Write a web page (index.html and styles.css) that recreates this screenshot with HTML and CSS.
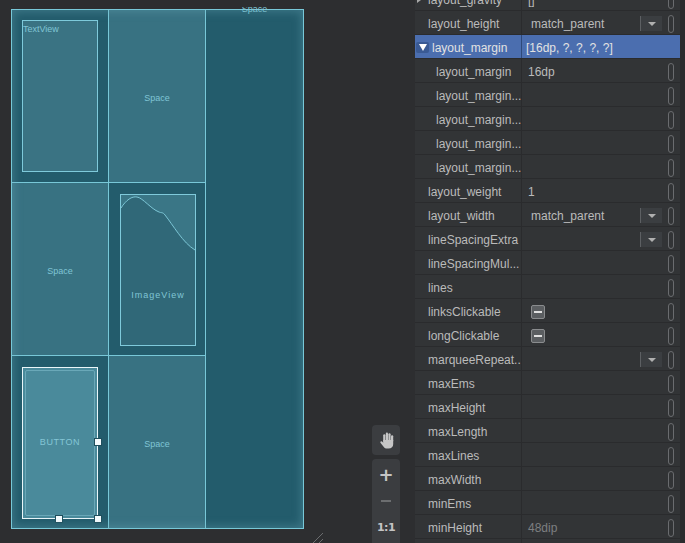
FILE: index.html
```html
<!DOCTYPE html>
<html>
<head>
<meta charset="utf-8">
<link rel="stylesheet" href="styles.css">
</head>
<body>
<div class="app">
  <div class="canvas">
    <div class="device">
      <div class="cell dark pad-a">
        <div class="view textview"><span class="lbl tl">TextView</span></div>
      </div>
      <div class="cell light center"><span class="lbl">Space</span></div>
      <div class="cell dark tall"><span class="lbl top">Space</span></div>
      <div class="cell light center"><span class="lbl">Space</span></div>
      <div class="cell dark pad-b">
        <div class="view imageview">
          <svg class="img" viewBox="0 0 74 150" preserveAspectRatio="none" width="74" height="150">
            <path d="M0,0 L0,13 C5,5 11,1 16,2 C22,3 30,14 38,17 C40,18 42,17 44,20 C52,30 62,48 74,55 L74,0 Z" fill="#3a7686"/>
            <path d="M0,13 C5,5 11,1 16,2 C22,3 30,14 38,17 C40,18 42,17 44,20 C52,30 62,48 74,55" fill="none" stroke="#7cc6d6" stroke-width="1"/>
          </svg>
          <span class="lbl wide">ImageView</span>
        </div>
      </div>
      <div class="cell dark pad-c">
        <div class="view button">
          <div class="btn-inner"><span class="lbl">BUTTON</span></div>
          <span class="handle h-r"></span>
          <span class="handle h-b"></span>
          <span class="handle h-br"></span>
        </div>
      </div>
      <div class="cell light center"><span class="lbl">Space</span></div>
    </div>

    <div class="zoom-box hand-box">
      <svg width="14" height="17" viewBox="0 0 14 17">
        <rect x="3.2" y="2.2" width="2.2" height="8" rx="1.1" fill="#c6c6c6"/>
        <rect x="5.8" y="0.6" width="2.2" height="9" rx="1.1" fill="#c6c6c6"/>
        <rect x="8.4" y="1.2" width="2.2" height="9" rx="1.1" fill="#c6c6c6"/>
        <rect x="11" y="3.2" width="2.2" height="7" rx="1.1" fill="#c6c6c6"/>
        <path d="M3.2,8 L13.2,8 L13.2,12 C13.2,14.8 11.5,16.6 8.6,16.6 L7,16.6 C5.6,16.6 4.6,16 3.8,15 L0.6,11 C0.1,10.3 0.4,9.5 1.1,9.3 C1.6,9.2 2,9.4 2.4,9.8 L3.2,10.8 Z" fill="#c6c6c6"/>
      </svg>
    </div>
    <div class="zoom-box zoom-stack">
      <span class="zplus">+</span>
      <span class="zminus"></span>
      <span class="zone">1:1</span>
    </div>
    <svg class="resize" width="12" height="12" viewBox="0 0 12 12">
      <line x1="0" y1="12" x2="11" y2="1" stroke="#6a6c6e" stroke-width="1"/>
      <line x1="6" y1="12" x2="11" y2="7" stroke="#6a6c6e" stroke-width="1"/>
    </svg>
  </div>

  <div class="props">
    <div class="row first">
      <div class="name"><span class="arrow-r"></span>layout_gravity</div>
      <div class="value"><span class="v">[]</span><span class="pill"></span></div>
    </div>
    <div class="row">
      <div class="name">layout_height</div>
      <div class="value"><span class="v c">match_parent</span><span class="combo"><i></i></span><span class="pill"></span></div>
    </div>
    <div class="row sel">
      <div class="name head"><span class="toggle"><i></i></span>layout_margin</div>
      <div class="value"><span class="v s">[16dp, ?, ?, ?, ?]</span></div>
    </div>
    <div class="row">
      <div class="name child">layout_margin</div>
      <div class="value"><span class="v">16dp</span><span class="pill"></span></div>
    </div>
    <div class="row">
      <div class="name child">layout_margin...</div>
      <div class="value"><span class="v"></span><span class="pill"></span></div>
    </div>
    <div class="row">
      <div class="name child">layout_margin...</div>
      <div class="value"><span class="v"></span><span class="pill"></span></div>
    </div>
    <div class="row">
      <div class="name child">layout_margin...</div>
      <div class="value"><span class="v"></span><span class="pill"></span></div>
    </div>
    <div class="row">
      <div class="name child">layout_margin...</div>
      <div class="value"><span class="v"></span><span class="pill"></span></div>
    </div>
    <div class="row">
      <div class="name">layout_weight</div>
      <div class="value"><span class="v">1</span><span class="pill"></span></div>
    </div>
    <div class="row">
      <div class="name">layout_width</div>
      <div class="value"><span class="v c">match_parent</span><span class="combo"><i></i></span><span class="pill"></span></div>
    </div>
    <div class="row">
      <div class="name">lineSpacingExtra</div>
      <div class="value"><span class="v"></span><span class="combo"><i></i></span><span class="pill"></span></div>
    </div>
    <div class="row">
      <div class="name">lineSpacingMul...</div>
      <div class="value"><span class="v"></span><span class="pill"></span></div>
    </div>
    <div class="row">
      <div class="name">lines</div>
      <div class="value"><span class="v"></span><span class="pill"></span></div>
    </div>
    <div class="row">
      <div class="name">linksClickable</div>
      <div class="value"><span class="v"><span class="check"><i></i></span></span><span class="pill"></span></div>
    </div>
    <div class="row">
      <div class="name">longClickable</div>
      <div class="value"><span class="v"><span class="check"><i></i></span></span><span class="pill"></span></div>
    </div>
    <div class="row">
      <div class="name">marqueeRepeat...</div>
      <div class="value"><span class="v"></span><span class="combo"><i></i></span><span class="pill"></span></div>
    </div>
    <div class="row">
      <div class="name">maxEms</div>
      <div class="value"><span class="v"></span><span class="pill"></span></div>
    </div>
    <div class="row">
      <div class="name">maxHeight</div>
      <div class="value"><span class="v"></span><span class="pill"></span></div>
    </div>
    <div class="row">
      <div class="name">maxLength</div>
      <div class="value"><span class="v"></span><span class="pill"></span></div>
    </div>
    <div class="row">
      <div class="name">maxLines</div>
      <div class="value"><span class="v"></span><span class="pill"></span></div>
    </div>
    <div class="row">
      <div class="name">maxWidth</div>
      <div class="value"><span class="v"></span><span class="pill"></span></div>
    </div>
    <div class="row">
      <div class="name">minEms</div>
      <div class="value"><span class="v"></span><span class="pill"></span></div>
    </div>
    <div class="row">
      <div class="name">minHeight</div>
      <div class="value"><span class="v dim">48dip</span><span class="pill"></span></div>
    </div>
    <div class="row">
      <div class="name">minLines</div>
      <div class="value"><span class="v"></span><span class="pill"></span></div>
    </div>
  </div>
  <div class="edge"></div>
</div>
</body>
</html>
```
FILE: styles.css
```css
* { box-sizing: border-box; }
html, body {
  margin: 0;
  padding: 0;
  background: #2d2e30;
  overflow: hidden;
}
.app {
  display: flex;
  width: 685px;
  height: 543px;
  overflow: hidden;
  font-family: "Liberation Sans", Arial, sans-serif;
}
.canvas {
  position: relative;
  width: 415px;
  height: 536px;
  margin-top: 7px;
  padding: 2px 0 0 11px;
  overflow: hidden;
  background: #2d2e30;
  flex: none;
}
.device {
  position: relative;
  width: 293px;
  height: 520px;
  border: 1px solid #78c8d8;
  background: #78c8d8;
  display: grid;
  grid-template-columns: 96px 96px 97px;
  grid-template-rows: 172px 172px 172px;
  gap: 1px;
}
.device::after {
  content: "";
  position: absolute;
  inset: 0;
  pointer-events: none;
  box-shadow: inset 0 0 9px 2px rgba(110, 170, 186, 0.35);
}
.cell { position: relative; }
.cell.dark { background: #235c6c; }
.cell.light { background: #387282; }
.cell.center {
  display: flex;
  align-items: center;
  justify-content: center;
}
.cell.center .lbl { margin-top: 4px; }
.cell.tall {
  grid-column: 3;
  grid-row: 1 / span 3;
  display: flex;
  justify-content: center;
}
.cell.pad-a { padding: 10px 10px 10px 10px; }
.cell.pad-b { padding: 11px 9px 9px 11px; }
.cell.pad-c { padding: 11px 10px 9px 10px; }

.lbl {
  font-family: "Liberation Sans", Arial, sans-serif;
  font-size: 9px;
  line-height: 9px;
  color: #80c5d5;
  white-space: nowrap;
}
.lbl.top {
  position: relative;
  top: -5px;
  height: 9px;
}
.lbl.wide { letter-spacing: 1px; }

.view {
  position: relative;
  width: 76px;
  height: 152px;
  border: 1px solid #7fcadb;
}
.textview {
  background: #3a7383;
}
.lbl.tl {
  display: block;
  margin: 3px 0 0 0;
  line-height: 10px;
}
.imageview {
  background: #306878;
  display: flex;
  align-items: center;
  justify-content: center;
}
.img {
  position: absolute;
  left: 0;
  top: 0;
  display: block;
}
.imageview .lbl {
  position: relative;
  margin-top: 50px;
}
.button {
  border-color: #eaf6f9;
  background: #4a8a9b;
  padding: 2px;
}
.btn-inner {
  width: 100%;
  height: 100%;
  border: 1px solid #6aa8b8;
  border-radius: 2px;
  display: flex;
  align-items: center;
  justify-content: center;
}
.btn-inner .lbl {
  letter-spacing: 0.6px;
  color: #84c6d6;
  margin-top: -2px;
}
.handle {
  position: absolute;
  width: 8px;
  height: 8px;
  background: #f4fbfd;
  border: 1px solid #1f4f5d;
}
.h-r { right: -5px; top: 70px; }
.h-b { left: 32px; bottom: -5px; }
.h-br { right: -5px; bottom: -5px; }

.zoom-box {
  position: absolute;
  left: 372px;
  width: 28px;
  background: #3b3d40;
  border-radius: 4px;
}
.hand-box {
  top: 418px;
  height: 30px;
  display: flex;
  align-items: center;
  justify-content: center;
}
.hand-box svg { margin-left: 1px; }
.zoom-stack {
  top: 452px;
  height: 100px;
  display: flex;
  flex-direction: column;
  align-items: center;
}
.zplus {
  margin-top: 7px;
  font-size: 18px;
  line-height: 18px;
  font-weight: bold;
  color: #c4c4c4;
  font-family: "DejaVu Sans", sans-serif;
}
.zminus {
  margin-top: 16px;
  width: 10px;
  height: 2px;
  background: #6c6e70;
}
.zone {
  margin-top: 20px;
  font-size: 11px;
  line-height: 11px;
  font-weight: bold;
  color: #c4c4c4;
  font-family: "DejaVu Sans", sans-serif;
  letter-spacing: -0.5px;
}
.resize {
  position: absolute;
  left: 312px;
  top: 525px;
}

.props {
  width: 265px;
  flex: none;
  height: 543px;
  overflow: hidden;
}
.row {
  display: flex;
  height: 24px;
  border-bottom: 1px solid #2a2b2d;
  background: #323436;
  font-size: 12px;
  color: #bbbbbb;
}
.row.first { margin-top: -13px; }
.name {
  width: 107px;
  flex: none;
  border-right: 1px solid #2a2b2d;
  padding-left: 13px;
  padding-top: 2px;
  display: flex;
  align-items: center;
  white-space: nowrap;
  overflow: hidden;
}
.name.child { padding-left: 21px; }
.name.head { padding-left: 0; }
.arrow-r {
  display: inline-block;
  width: 0;
  height: 0;
  margin-left: -11px;
  margin-right: 7px;
  border-top: 3px solid transparent;
  border-bottom: 3px solid transparent;
  border-left: 4px solid #a8a8a8;
}
.toggle {
  width: 13px;
  height: 11px;
  margin-left: 1px;
  margin-right: 3px;
  background: #3a5a94;
  border-radius: 2px;
  display: flex;
  align-items: center;
  justify-content: center;
}
.toggle i {
  width: 0;
  height: 0;
  border-left: 4px solid transparent;
  border-right: 4px solid transparent;
  border-top: 7px solid #ffffff;
}
.value {
  flex: 1;
  display: flex;
  align-items: center;
  padding: 2px 6px 0 6px;
  min-width: 0;
}
.v {
  flex: 1;
  white-space: nowrap;
  display: flex;
  align-items: center;
}
.v.c { padding-left: 3px; }
.v.s { margin-left: -2px; }
.v.dim { color: #7d7f81; }
.row.sel {
  background: #4b6eaf;
  color: #e2e2e2;
}
.row.sel .name { border-right-color: #2f4a7a; }
.combo {
  width: 22px;
  height: 15px;
  margin-right: 6px;
  background: #3b3e41;
  border-left: 1px solid #5d6063;
  display: flex;
  align-items: center;
  justify-content: center;
}
.combo i {
  width: 0;
  height: 0;
  border-left: 4px solid transparent;
  border-right: 4px solid transparent;
  border-top: 4px solid #b0b0b0;
}
.pill {
  width: 6px;
  height: 18px;
  border: 1px solid #6a6c6f;
  border-radius: 3px;
  flex: none;
}
.check {
  width: 14px;
  height: 14px;
  margin-left: 3px;
  background: #5b5e61;
  border: 1px solid #8a8c8e;
  border-radius: 2px;
  display: flex;
  align-items: center;
  justify-content: center;
}
.check i {
  width: 8px;
  height: 2px;
  background: #e0e0e0;
}
.edge {
  flex: 1;
  background: #2a2b2d;
}
```
